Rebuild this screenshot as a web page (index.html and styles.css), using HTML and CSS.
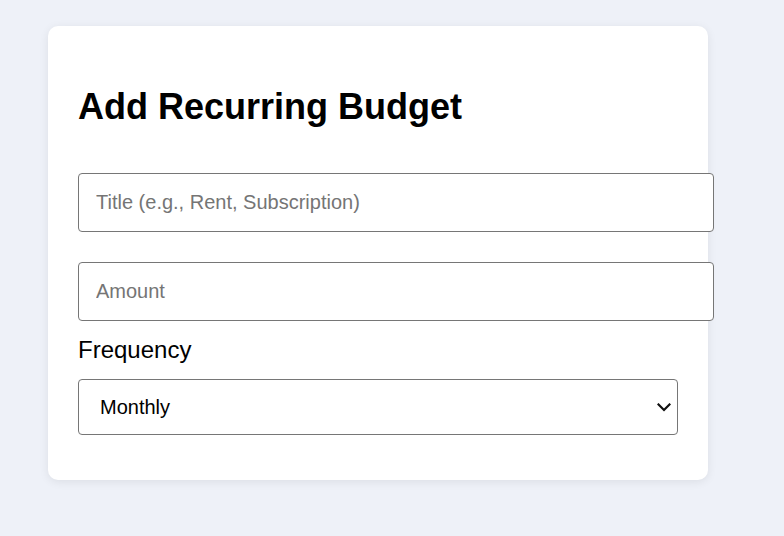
FILE: index.html
```html
<!DOCTYPE html>
<html lang="en">
<head>
<meta charset="utf-8">
<title>Add Recurring Budget</title>
<link rel="stylesheet" href="styles.css">
</head>
<body>
<div class="card">
  <h1 class="card-title">Add Recurring Budget</h1>
  <form class="budget-form">
    <input class="field" type="text" placeholder="Title (e.g., Rent, Subscription)">
    <input class="field field-amount" type="number" placeholder="Amount">
    <label class="field-label" for="freq">Frequency</label>
    <div class="select-wrap">
      <select class="select" id="freq">
        <option>Monthly</option>
        <option>Weekly</option>
        <option>Yearly</option>
      </select>
      <svg class="select-arrow" width="14" height="9" viewBox="0 0 14 9" aria-hidden="true">
        <path d="M1.5 1.5 L7 7 L12.5 1.5" fill="none" stroke="#111" stroke-width="2.2" stroke-linecap="square"/>
      </svg>
    </div>
  </form>
</div>
</body>
</html>
```
FILE: styles.css
```css
html, body {
  margin: 0;
  padding: 0;
}
body {
  background: #eef1f8;
  font-family: "Liberation Sans", Arial, sans-serif;
  padding: 26px 48px;
}
.card {
  width: 600px;
  background: #ffffff;
  border-radius: 10px;
  padding: 30px;
  box-shadow: 0 2px 10px rgba(0, 0, 0, 0.08);
}
.card-title {
  font-size: 36px;
  font-weight: bold;
  margin: 30px 0 0;
  color: #000;
  line-height: normal;
}
.budget-form {
  display: flex;
  flex-direction: column;
  align-items: flex-start;
  padding-top: 45px;
}
.field {
  display: block;
  width: 600px;
  padding: 17px;
  margin: 0 0 30px;
  font-family: "Liberation Sans", Arial, sans-serif;
  font-size: 20px;
  border: 1px solid #767676;
  border-radius: 4px;
  color: #000;
  background: #fff;
  box-sizing: content-box;
  line-height: normal;
}
.field::placeholder {
  color: #757575;
}
.field-amount {
  margin-bottom: 15px;
  -moz-appearance: textfield;
}
.field-amount::-webkit-outer-spin-button,
.field-amount::-webkit-inner-spin-button {
  -webkit-appearance: none;
  margin: 0;
}
.field-label {
  display: block;
  font-size: 24px;
  color: #000;
  margin-bottom: 15px;
  line-height: normal;
}
.select-wrap {
  position: relative;
  width: 600px;
  margin: 0 0 15px;
}
.select {
  display: block;
  width: 100%;
  height: 56px;
  padding: 0 40px 0 21px;
  margin: 0;
  font-family: "Liberation Sans", Arial, sans-serif;
  font-size: 20px;
  border: 1px solid #767676;
  border-radius: 4px;
  background: #fff;
  color: #000;
  box-sizing: border-box;
  -webkit-appearance: none;
  appearance: none;
}
.select-arrow {
  position: absolute;
  right: 7px;
  top: 24px;
  pointer-events: none;
}
```
